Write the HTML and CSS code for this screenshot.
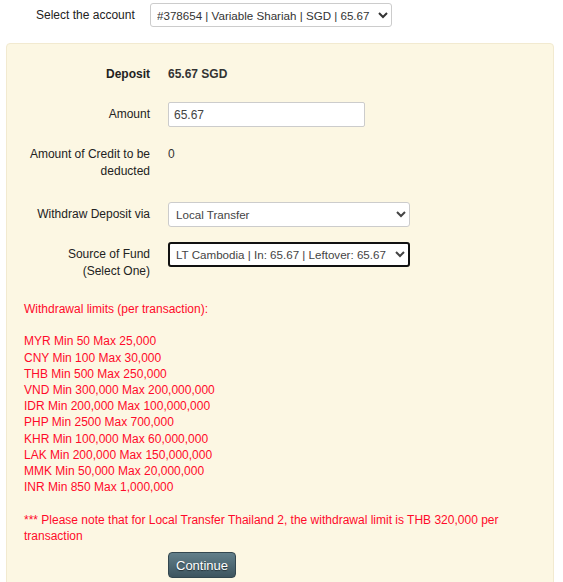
FILE: index.html
```html
<!DOCTYPE html>
<html lang="en">
<head>
    <meta charset="UTF-8">
    <meta name="viewport" content="width=device-width, initial-scale=1.0">
    <title>Withdraw Deposit</title>
    <link rel="stylesheet" href="styles.css">
</head>
<body>
    <div class="account-row">
        <label class="account-label" for="account">Select the account</label>
        <select id="account" class="account-select">
            <option>#378654 | Variable Shariah | SGD | 65.67</option>
        </select>
    </div>

    <div class="panel">
        <div class="row">
            <div class="label strong">Deposit</div>
            <div class="value strong">65.67 SGD</div>
        </div>
        <div class="row">
            <div class="label">Amount</div>
            <input type="text" class="amount" value="65.67">
        </div>
        <div class="row row-credit">
            <div class="label">Amount of Credit to be deducted</div>
            <div class="value">0</div>
        </div>
        <div class="row">
            <div class="label">Withdraw Deposit via</div>
            <select class="field">
                <option>Local Transfer</option>
            </select>
        </div>
        <div class="row">
            <div class="label">Source of Fund<br>(Select One)</div>
            <select class="field focused">
                <option>LT Cambodia | In: 65.67 | Leftover: 65.67</option>
            </select>
        </div>

        <div class="limits">
            Withdrawal limits (per transaction):<br><br>
            MYR Min 50 Max 25,000<br>
            CNY Min 100 Max 30,000<br>
            THB Min 500 Max 250,000<br>
            VND Min 300,000 Max 200,000,000<br>
            IDR Min 200,000 Max 100,000,000<br>
            PHP Min 2500 Max 700,000<br>
            KHR Min 100,000 Max 60,000,000<br>
            LAK Min 200,000 Max 150,000,000<br>
            MMK Min 50,000 Max 20,000,000<br>
            INR Min 850 Max 1,000,000<br><br>
            *** Please note that for Local Transfer Thailand 2, the withdrawal limit is THB 320,000 per transaction
        </div>

        <div class="actions">
            <button class="continue">Continue</button>
        </div>
    </div>
</body>
</html>
```

FILE: styles.css
```css
body {
    font-family: "Liberation Sans", Arial, sans-serif;
    font-size: 12px;
    color: #333;
    margin: 0;
    background: #fff;
}
.account-row {
    display: flex;
    align-items: center;
    padding: 3px 0 0 36px;
    height: 24px;
}
.account-label {
    width: 114px;
    color: #222;
}
.account-select {
    width: 242px;
    height: 24px;
    font-family: "Liberation Sans", Arial, sans-serif;
    font-size: 11.6px;
    color: #333;
    border: 1px solid #ccc;
    border-radius: 3px;
    background: #fff;
    padding: 0 2px;
}
.panel {
    margin: 16px 9px 0 6px;
    background: #fcf7e3;
    border: 1px solid #f2ead0;
    border-radius: 4px;
    padding: 18px 0 20px 0;
}
.row {
    display: flex;
    align-items: flex-start;
    min-height: 25px;
    margin-bottom: 15px;
}
.row-credit {
    margin-bottom: 22px;
}
.label {
    width: 143px;
    text-align: right;
    padding-top: 4px;
    line-height: 17px;
    color: #222;
    flex-shrink: 0;
    margin-right: 18px;
}
.value {
    padding-top: 4px;
    line-height: 17px;
}
.strong {
    font-weight: bold;
}
.label.strong {
    color: #222;
}
.amount {
    width: 197px;
    height: 25px;
    box-sizing: border-box;
    border: 1px solid #ccc;
    border-radius: 2px;
    padding: 0 5px;
    font-family: "Liberation Sans", Arial, sans-serif;
    font-size: 12px;
    color: #444;
    background: #fff;
}
.field {
    width: 242px;
    height: 25px;
    box-sizing: border-box;
    border: 1px solid #ccc;
    border-radius: 3px;
    padding: 0 3px;
    font-family: "Liberation Sans", Arial, sans-serif;
    font-size: 11.6px;
    color: #444;
    background: #fff;
}
.focused {
    border: 2px solid #111;
    padding: 0 2px;
}
.limits {
    color: #ff0a2a;
    line-height: 16.2px;
    padding: 6px 0 0 17px;
    width: 480px;
}
.actions {
    padding: 8px 0 0 161px;
}
.continue {
    height: 26px;
    padding: 0 7px;
    font-family: "Liberation Sans", Arial, sans-serif;
    font-size: 13px;
    color: #fff;
    text-shadow: 0 1px 1px rgba(0, 0, 0, 0.5);
    background: linear-gradient(#627f8a, #3d555f);
    border: 1px solid #33474f;
    border-radius: 4px;
    cursor: pointer;
}
.continue:hover {
    background: linear-gradient(#56717b, #334952);
}
```
